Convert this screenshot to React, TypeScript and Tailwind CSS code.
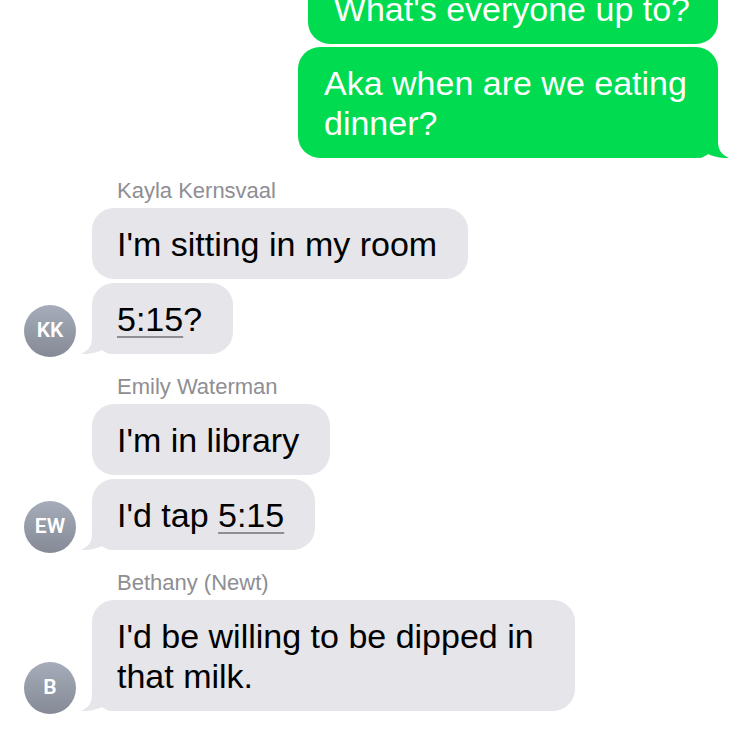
import React from 'react'

const font = { fontFamily: '"Liberation Sans", Arial, sans-serif' }

function RightTail() {
  return (
    <svg className="absolute right-[-11px] bottom-0" width="30" height="30" viewBox="0 0 30 30">
      <path
        d="M0 30 L0 0 L19 0 L19 14 C19 22 23 27 30 30 C24 30.5 14 29 8 25.5 C6 28 3 30 0 30 Z"
        fill="#00db4f"
      />
    </svg>
  )
}

function LeftTail() {
  return (
    <svg className="absolute left-[-11px] bottom-0" width="30" height="30" viewBox="0 0 30 30">
      <path
        d="M30 30 L30 0 L11 0 L11 14 C11 22 7 27 0 30 C6 30.5 16 29 22 25.5 C24 28 27 30 30 30 Z"
        fill="#e5e5ea"
      />
    </svg>
  )
}

function Sent({ children, tail = false, className = '' }: { children: React.ReactNode; tail?: boolean; className?: string }) {
  return (
    <div className={`relative self-end mr-[32px] ${className}`}>
      <div className="relative z-10 rounded-[22px] bg-[#00db4f] pl-[26px] pr-[28px] py-[15.5px] text-[34px] leading-[40px] text-white">
        {children}
      </div>
      {tail && <RightTail />}
    </div>
  )
}

function Received({ children, tail = false, className = '' }: { children: React.ReactNode; tail?: boolean; className?: string }) {
  return (
    <div className={`relative ${className}`}>
      <div className="relative z-10 rounded-[22px] bg-[#e5e5ea] pl-[25px] pr-[31px] py-[15.5px] text-[34px] leading-[40px] text-black">
        {children}
      </div>
      {tail && <LeftTail />}
    </div>
  )
}

function Time({ children }: { children: React.ReactNode }) {
  return (
    <span className="underline decoration-[#8e8e93] decoration-[1.5px] underline-offset-[5px]">{children}</span>
  )
}

type Msg = { text: React.ReactNode; width?: string }

function Group({ name, initials, messages }: { name: string; initials: string; messages: Msg[] }) {
  return (
    <div className="mt-[20px] flex flex-col">
      <div className="pl-[117px] h-[26px] text-[22px] leading-[26px] text-[#8e8e93]">{name}</div>
      <div className="mt-[4px] flex flex-col gap-[4px]">
        {messages.map((m, i) => {
          const last = i === messages.length - 1
          return (
            <div key={i} className="flex items-end">
              <div className="w-[92px] flex justify-start pl-[24px]">
                {last && (
                  <div
                    className="mb-[-3px] w-[52px] h-[52px] rounded-full bg-gradient-to-b from-[#a6acb9] to-[#858a96] flex items-center justify-center text-white text-[21px] font-semibold"
                    style={{ fontFamily: 'Roboto, "Liberation Sans", sans-serif' }}
                  >
                    {initials}
                  </div>
                )}
              </div>
              <Received tail={last} className={m.width ?? ''}>
                {m.text}
              </Received>
            </div>
          )
        })}
      </div>
    </div>
  )
}

export default function App() {
  return (
    <div className="w-[750px] h-[731px] overflow-hidden bg-white" style={font}>
      <div className="mt-[-27px] flex flex-col">
        <Sent>What's everyone up to?</Sent>
        <div className="mt-[3px] flex flex-col">
          <Sent tail className="w-[420px]">
            Aka when are we eating dinner?
          </Sent>
        </div>

        <Group
          name="Kayla Kernsvaal"
          initials="KK"
          messages={[{ text: "I'm sitting in my room" }, { text: <><Time>5:15</Time>?</> }]}
        />
        <Group
          name="Emily Waterman"
          initials="EW"
          messages={[{ text: "I'm in library" }, { text: <>I'd tap <Time>5:15</Time></> }]}
        />
        <Group
          name="Bethany (Newt)"
          initials="B"
          messages={[{ text: "I'd be willing to be dipped in that milk.", width: 'w-[483px]' }]}
        />
      </div>
    </div>
  )
}
